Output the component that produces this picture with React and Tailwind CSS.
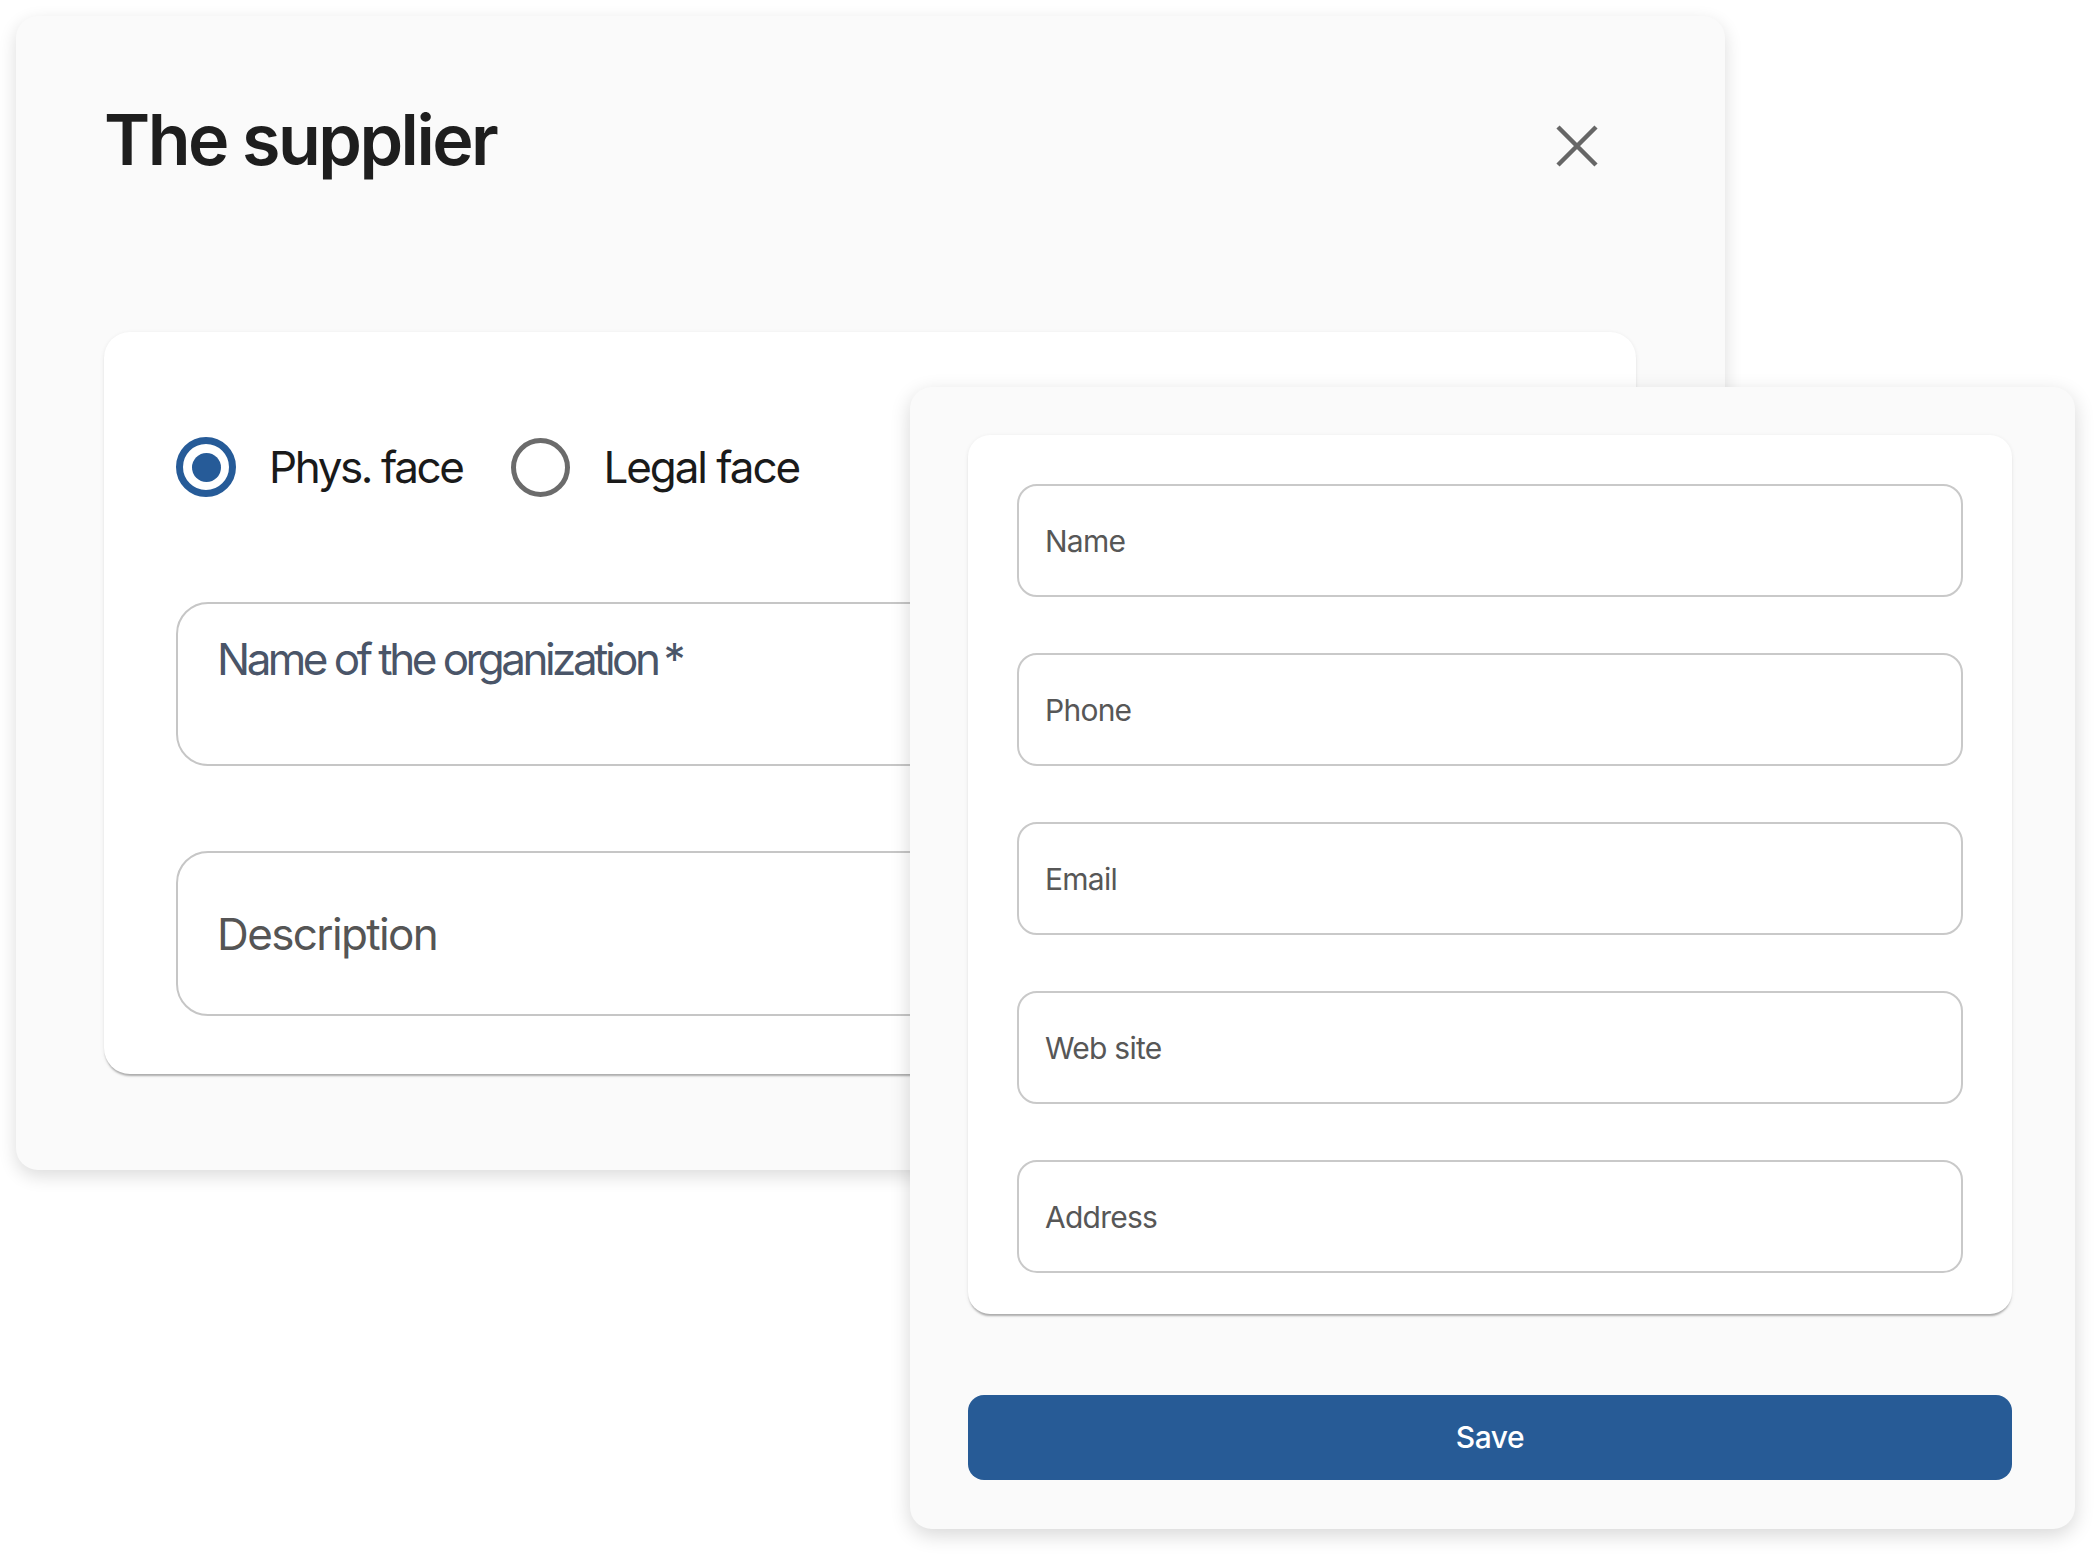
import React, { useState } from 'react'

const Radio = ({ checked, label, tracking, onClick }) => (
  <button type="button" onClick={onClick} className="flex items-center">
    {checked ? (
      <span className="w-[60px] h-[60px] rounded-full border-[7px] border-[#265b98] flex items-center justify-center">
        <span className="w-[29px] h-[29px] rounded-full bg-[#265b98]" />
      </span>
    ) : (
      <span className="w-[59px] h-[59px] rounded-full border-[5px] border-[#6b6b6b]" />
    )}
    <span className={`ml-[33px] text-[44px] leading-none text-[#1a1a1a] ${tracking}`}>{label}</span>
  </button>
)

const Field = ({ label }) => (
  <div className="h-[113px] rounded-[20px] border-2 border-[#c9c9c9] bg-white flex items-center pl-[26px]">
    <span className="text-[30px] leading-none tracking-[-0.025em] text-[#575757]">{label}</span>
  </div>
)

const App = () => {
  const [kind, setKind] = useState('phys')
  const fields = ['Name', 'Phone', 'Email', 'Web site', 'Address']

  return (
    <div className="relative w-[2100px] h-[1554px] bg-white font-['Inter',sans-serif] overflow-hidden">
      <div className="ml-[16px] mt-[16px] w-[1709px] h-[1154px] rounded-[22px] bg-[#fafafa] shadow-[0_6px_18px_rgba(0,0,0,0.14)] pt-[89px] pl-[88px]">
        <div className="flex items-start justify-between pr-[127px]">
          <h2 className="text-[70px] leading-none font-semibold tracking-[-0.036em] text-[#1e1e1e]">The supplier</h2>
          <svg width="42" height="42" viewBox="0 0 42 42" className="mt-[20px]">
            <path d="M2 2 L40 40 M40 2 L2 40" stroke="#666" strokeWidth="4.5" />
          </svg>
        </div>

        <div className="mt-[157px] w-[1532px] h-[742px] rounded-[26px] bg-white shadow-[0_3px_2px_-1px_rgba(0,0,0,0.28),0_1px_4px_rgba(0,0,0,0.08)] px-[72px] pt-[105px]">
          <div className="flex items-center gap-[49px]">
            <Radio checked={kind === 'phys'} label="Phys. face" tracking="tracking-[-0.055em]" onClick={() => setKind('phys')} />
            <Radio checked={kind === 'legal'} label="Legal face" tracking="tracking-[-0.047em]" onClick={() => setKind('legal')} />
          </div>

          <div className="mt-[105px] h-[164px] rounded-[32px] border-2 border-[#c6c6c6] pl-[39px] pt-[33px]">
            <span className="text-[44px] leading-none tracking-[-0.08em] text-[#4a5568]">
              Name of the organization<span className="ml-[6px]">*</span>
            </span>
          </div>

          <div className="mt-[85px] h-[165px] rounded-[32px] border-2 border-[#c6c6c6] pl-[39px] flex items-center">
            <span className="text-[44px] leading-none tracking-[-0.037em] text-[#555]">Description</span>
          </div>
        </div>
      </div>

      <div className="absolute left-[910px] top-[387px] w-[1165px] h-[1142px] rounded-[22px] bg-[#fafafa] shadow-[0_6px_20px_rgba(0,0,0,0.16)] pl-[58px] pr-[63px] pt-[48px]">
        <div className="h-[879px] rounded-[22px] bg-white shadow-[0_3px_2px_-1px_rgba(0,0,0,0.28),0_1px_4px_rgba(0,0,0,0.08)] px-[49px] pt-[49px] flex flex-col gap-[56px]">
          {fields.map((f) => (
            <Field key={f} label={f} />
          ))}
        </div>
        <button className="mt-[81px] w-full h-[85px] rounded-[16px] bg-[#275b96] text-white text-[30px] font-medium tracking-[-0.015em]">
          Save
        </button>
      </div>
    </div>
  )
}

export default App
